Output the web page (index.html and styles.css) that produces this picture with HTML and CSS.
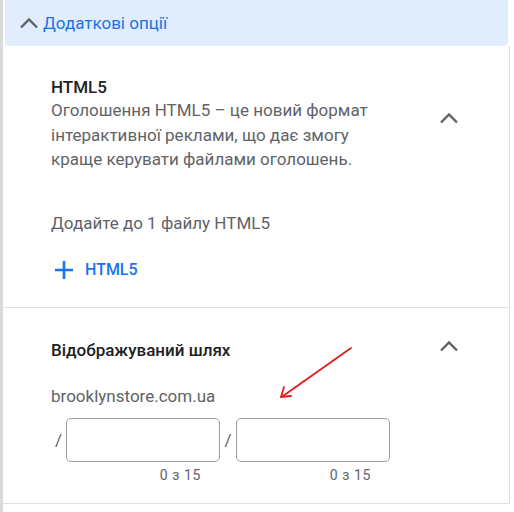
FILE: index.html
```html
<!DOCTYPE html>
<html lang="uk">
<head>
  <meta charset="UTF-8" />
  <title>Додаткові опції</title>
  <link rel="stylesheet" href="styles.css">
</head>
<body>

  <div class="panel">
    <div class="more-bar">
      <svg class="chev" width="20" height="12" viewBox="0 0 20 12"><polyline points="2,10.5 10,2.5 18,10.5" /></svg>
      <span>Додаткові опції</span>
    </div>

    <div class="section">
      <div class="sec-head">
        <div>
          <div class="sec-title">HTML5</div>
          <div class="sec-desc">Оголошення HTML5 – це новий формат інтерактивної реклами, що дає змогу краще керувати файлами оголошень.</div>
        </div>
        <svg class="chev" width="20" height="12" viewBox="0 0 20 12"><polyline points="2,10.5 10,2.5 18,10.5" /></svg>
      </div>
      <div class="hint">Додайте до 1 файлу HTML5</div>
      <div class="add-btn">
        <svg width="18" height="18" viewBox="0 0 18 18"><path d="M9 0v18M0 9h18" /></svg>
        <span>HTML5</span>
      </div>
    </div>

    <div class="section path-sec">
      <div class="sec-head top">
        <div class="sec-title">Відображуваний шлях</div>
        <svg class="chev" width="20" height="12" viewBox="0 0 20 12"><polyline points="2,10.5 10,2.5 18,10.5" /></svg>
      </div>
      <div class="domain">brooklynstore.com.ua</div>
      <div class="path-row">
        <div class="path-field">
          <div class="field-line"><span class="slash">/</span><input type="text"></div>
          <div class="count">0 з 15</div>
        </div>
        <div class="path-field">
          <div class="field-line"><span class="slash">/</span><input type="text"></div>
          <div class="count">0 з 15</div>
        </div>
      </div>

      <!-- стрілка-підказка на скріншоті -->
      <svg class="arrow" width="80" height="60" viewBox="0 0 80 60">
        <line x1="76" y1="2" x2="8" y2="50" />
        <polyline points="9,41 6,51 16,50" />
      </svg>
    </div>
  </div>

</body>
</html>
```

FILE: styles.css
```css
body {
  margin: 0;
  font-family: Roboto, "Noto Sans", sans-serif;
  background: #fff;
}

.panel {
  width: 507px;
  border-left: 3px solid #d9d9d9;
  min-height: 512px;
}

.chev {
  fill: none;
  stroke: #5f6368;
  stroke-width: 2.4;
  flex-shrink: 0;
}

.more-bar {
  height: 46px;
  margin: 0 0 0 2px;
  width: 503px;
  background: #e1edfc;
  border-radius: 0 0 4px 4px;
  display: flex;
  align-items: center;
  padding-left: 14px;
  box-sizing: border-box;
  color: #1a73e8;
  font-size: 17px;
}

.more-bar .chev {
  margin-right: 4px;
  margin-top: -1px;
}

.section {
  border-right: 1px solid #e0e0e0;
  border-bottom: 1px solid #e0e0e0;
  padding: 30px 0 19px 48px;
}

.sec-head {
  display: flex;
  align-items: center;
  justify-content: space-between;
  padding-right: 50px;
}

.sec-head > div { width: 330px; }

.sec-head.top {
  align-items: flex-start;
}

.sec-head.top .chev { margin-top: 1px; }

.sec-title {
  font-size: 17px;
  line-height: 22px;
  font-weight: 500;
  color: #202124;
}

.sec-desc {
  font-size: 17px;
  line-height: 24.5px;
  color: #5f6368;
}

.sec-head .chev { margin-top: -12px; }

.hint {
  margin-top: 39px;
  font-size: 17px;
  line-height: 24px;
  color: #5f6368;
}

.add-btn {
  margin-top: 17px;
  height: 36px;
  display: flex;
  align-items: center;
  color: #1a73e8;
  font-size: 16px;
  font-weight: 500;
}

.add-btn svg {
  fill: none;
  stroke: #1a73e8;
  stroke-width: 2.6;
  margin: 0 12px 0 4px;
}

.path-sec {
  position: relative;
  padding-top: 31px;
  padding-bottom: 20px;
}

.domain {
  margin-top: 23px;
  font-size: 17px;
  line-height: 24px;
  color: #5f6368;
}

.path-row {
  display: flex;
  margin-top: 10px;
}

.field-line {
  display: flex;
  align-items: center;
}

.slash {
  width: 15px;
  text-align: center;
  color: #5f6368;
  font-size: 17px;
}

.path-field + .path-field .slash { width: 16px; }

.path-field input {
  width: 154px;
  height: 44px;
  box-sizing: border-box;
  border: 1px solid #9aa0a6;
  border-radius: 5px;
  padding: 0 10px;
  font-family: inherit;
  font-size: 15px;
}

.count {
  text-align: right;
  padding-right: 19px;
  margin-top: 5px;
  font-size: 14px;
  letter-spacing: 0.6px;
  line-height: 16px;
  color: #5f6368;
}

.arrow {
  position: absolute;
  left: 272px;
  top: 38px;
  fill: none;
  stroke: #e31b1b;
  stroke-width: 1.8;
  stroke-linecap: round;
}
```
